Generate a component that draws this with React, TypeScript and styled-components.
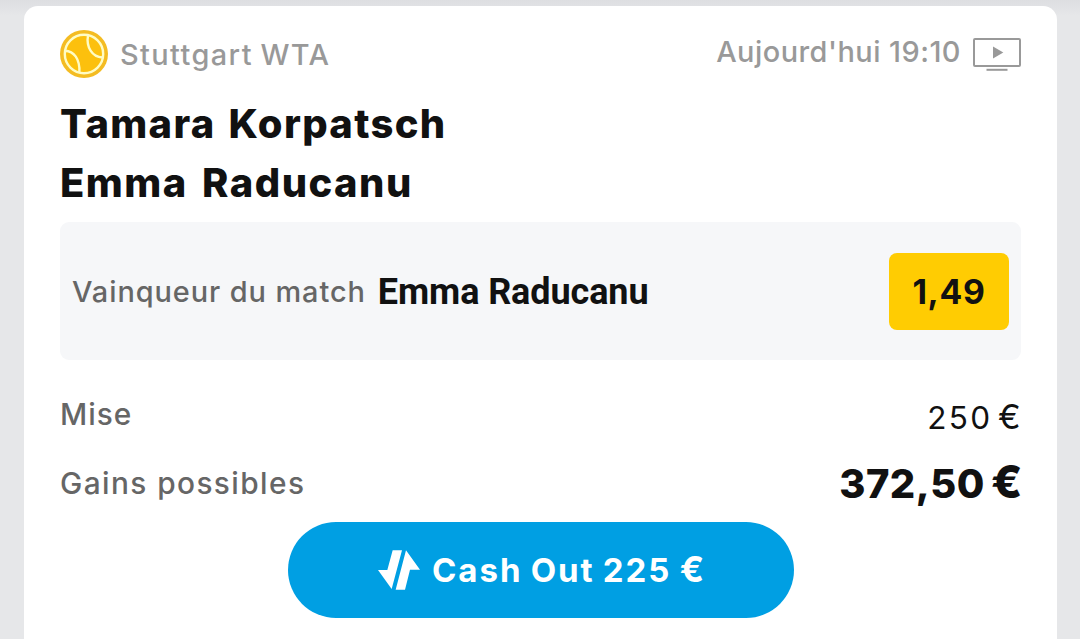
import styled, { createGlobalStyle } from 'styled-components';

const GlobalStyle = createGlobalStyle`
  * {
    box-sizing: border-box;
  }

  body {
    margin: 0;
    overflow: hidden;
    font-family: 'Inter', sans-serif;
    color: #111;
  }
`;

const Page = styled.main`
  height: 639px;
  padding: 6px 23px 0 24px;
  background: linear-gradient(#dddee1, #e6e7e9 16px);
`;

const Card = styled.article`
  display: flex;
  flex-direction: column;
  height: 648px;
  padding: 24px 36px 0;
  border-radius: 14px;
  background: #fff;
`;

const Header = styled.header`
  display: flex;
  justify-content: space-between;
  height: 48px;
  color: #999;
`;

const Tournament = styled.div`
  display: flex;
  align-items: center;
  gap: 12px;
`;

const Schedule = styled.div`
  display: flex;
  align-items: center;
  gap: 12px;
  padding-bottom: 5px;
`;

interface TextProps {
  $size: number;
  $spacing?: number;
  $word?: number;
}

const Text = styled.span<TextProps>`
  font-size: ${(props) => props.$size}px;
  font-weight: 500;
  letter-spacing: ${(props) => props.$spacing ?? 0}px;
  word-spacing: ${(props) => props.$word ?? 0}px;
  white-space: nowrap;
`;

const Bold = styled(Text)`
  font-weight: 700;
`;

const Heavy = styled(Text)`
  font-weight: 800;
`;

const Label = styled(Text)`
  color: #666;
`;

const Players = styled.div`
  display: flex;
  flex-direction: column;
  margin-top: 16px;
  line-height: 59px;
`;

const Selection = styled.section`
  display: flex;
  align-items: center;
  height: 138px;
  margin-top: 10px;
  padding: 0 12px;
  border-radius: 9px;
  background: #f6f7f9;
`;

const Pick = styled.span`
  margin-left: 12px;
  padding-top: 2px;
  font-family: 'Roboto', sans-serif;
  font-size: 36px;
  font-weight: 700;
  letter-spacing: -0.1px;
  white-space: nowrap;
`;

const Odds = styled.div`
  display: flex;
  align-items: center;
  justify-content: center;
  width: 120px;
  height: 77px;
  margin-left: auto;
  border-radius: 8px;
  background: #ffcc02;
`;

const Summary = styled.div`
  display: flex;
  flex-direction: column;
  margin-top: 24px;
`;

const Row = styled.div<{ $height: number }>`
  display: flex;
  align-items: center;
  justify-content: space-between;
  height: ${(props) => props.$height}px;
`;

const Stake = styled(Text)`
  margin-right: -2px;
  padding-top: 7px;
  font-weight: 400;
`;

const Winnings = styled(Heavy)`
  margin-right: -2px;
`;

const Euro = styled.span<{ $scale: number }>`
  font-size: ${(props) => props.$scale}em;
  line-height: 0;
`;

const CashOut = styled.button`
  display: flex;
  align-items: center;
  gap: 12px;
  width: 506px;
  height: 96px;
  margin-left: 228px;
  padding: 0 0 0 90px;
  border: 0;
  border-radius: 48px;
  background: #009fe3;
  color: #fff;
  font-family: inherit;
`;

const Tv = styled.svg`
  margin-top: 6px;
`;

function TennisBall() {
  return (
    <svg width="48" height="48" viewBox="0 0 48 48" fill="none">
      <circle cx="24" cy="24" r="24" fill="#f4bc22" />
      <circle cx="24" cy="24" r="19.2" fill="#fcc00d" stroke="#fffcc4" strokeWidth="2.4" />
      <path
        d="M5 20.7C14 21 20 29 19.4 42.5M28 5.5C26 17 32 27 42.5 27.5"
        stroke="#fffcc4"
        strokeWidth="2.4"
      />
    </svg>
  );
}

function LiveTv() {
  return (
    <Tv width="48" height="33" viewBox="0 0 48 33" fill="none">
      <rect x="1" y="1" width="46" height="27" rx="1" stroke="#999" strokeWidth="2" />
      <path d="M20 8.5V20.5L30.3 14.5Z" fill="#999" />
      <path d="M13.5 31.8H34.5" stroke="#999" strokeWidth="2" />
    </Tv>
  );
}

function CashOutArrows() {
  return (
    <svg width="42" height="40" viewBox="0 0 126 118" fill="#fff">
      <path d="M44 0H72L41 116L0 59H28Z" />
      <path d="M84 0L126 58H96L81 118H53Z" />
    </svg>
  );
}

function App() {
  return (
    <>
      <GlobalStyle />
      <Page>
        <Card>
          <Header>
            <Tournament>
              <TennisBall />
              <Text $size={28.9} $spacing={1.4} $word={-1.5}>Stuttgart WTA</Text>
            </Tournament>
            <Schedule>
              <Text $size={28.9} $spacing={0.47}>Aujourd'hui 19:10</Text>
              <LiveTv />
            </Schedule>
          </Header>
          <Players>
            <Heavy $size={39.9} $spacing={1.35} $word={3}>Tamara Korpatsch</Heavy>
            <Heavy $size={39.9} $spacing={1.5} $word={4}>Emma Raducanu</Heavy>
          </Players>
          <Selection>
            <Label $size={28.9} $spacing={0.93}>Vainqueur du match</Label>
            <Pick>Emma Raducanu</Pick>
            <Odds>
              <Bold $size={33.7} $spacing={0.7}>1,49</Bold>
            </Odds>
          </Selection>
          <Summary>
            <Row $height={60}>
              <Label $size={29.8} $spacing={1}>Mise</Label>
              <Stake $size={31.5} $spacing={2.3} $word={-5.5}>
                250 <Euro $scale={1.08}>€</Euro>
              </Stake>
            </Row>
            <Row $height={78}>
              <Label $size={29.8} $spacing={1.42}>Gains possibles</Label>
              <Winnings $size={39.9} $spacing={0.5} $word={-3}>
                372,50 <Euro $scale={1.14}>€</Euro>
              </Winnings>
            </Row>
          </Summary>
          <CashOut>
            <CashOutArrows />
            <Bold $size={33} $spacing={1.95} $word={-1.5}>
              Cash Out 225 <Euro $scale={1.08}>€</Euro>
            </Bold>
          </CashOut>
        </Card>
      </Page>
    </>
  );
}

export default App;
